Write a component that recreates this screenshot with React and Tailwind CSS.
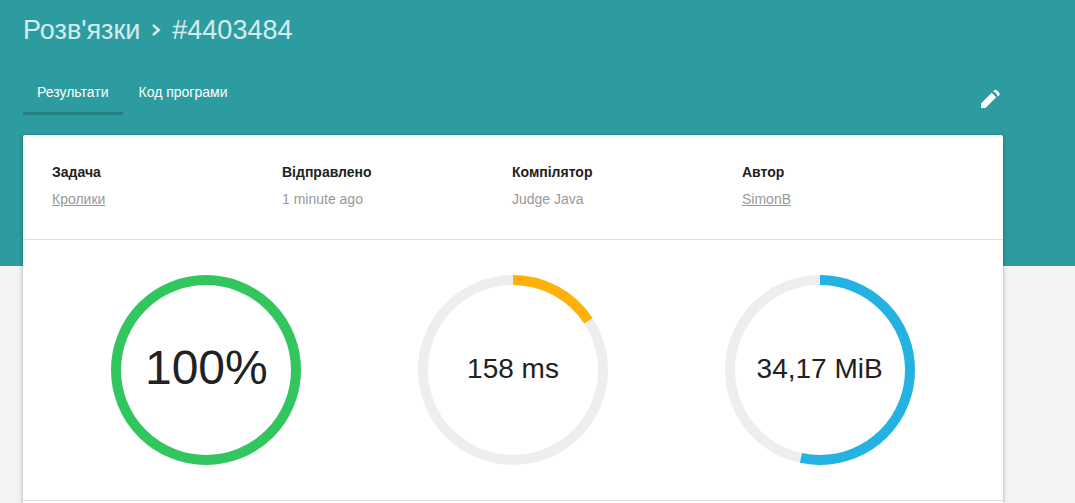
const details = [
  { label: 'Задача', value: 'Кролики', href: '#problem' },
  { label: 'Відправлено', value: '1 minute ago' },
  { label: 'Компілятор', value: 'Judge Java' },
  { label: 'Автор', value: 'SimonB', href: '#author' },
];

const gauges = [
  { text: '100%', percent: 100, stroke: 'stroke-[#32c65f]', size: 'pb-1 text-5xl' },
  { text: '158 ms', percent: 15.8, stroke: 'stroke-[#ffb109]', size: 'pb-0.5 text-[28px]' },
  { text: '34,17 MiB', percent: 53.4, stroke: 'stroke-[#23b2e2]', size: 'pb-0.5 text-[28px]' },
];

function PencilIcon() {
  return (
    <svg viewBox="0 0 24 24" className="size-6" fill="currentColor" aria-hidden="true">
      <path d="M2 17.2c0-.5.2-.9.5-1.2L12.7 5.8l4.5 4.5L7 20.5c-.3.3-.7.5-1.2.5H2z" />
      <path d="M14 4.5l1-1c.9-.9 2.2-.9 3.1 0l1.9 1.9c.9.9.9 2.2 0 3.1l-1.2 1.2c-.3-2.2-2.4-4.6-4.8-5.2z" />
    </svg>
  );
}

function Header() {
  return (
    <header className="bg-[#2c9ca0] pb-[151px] pl-[23px] pr-[72px] pt-2.5 text-white">
      <h1 className="flex items-center text-[27px] leading-10 text-white/80">
        <a href="#submissions">Розв'язки</a>
        <svg viewBox="0 0 10 14" className="mx-[11px] h-3.5 w-2.5" fill="none" stroke="currentColor" strokeWidth="2.4" aria-hidden="true">
          <path d="M2 2 7.8 7 2 12" />
        </svg>
        <span>#4403484</span>
      </h1>
      <div className="mt-5 flex items-start justify-between">
        <nav className="flex gap-0.5 text-sm leading-5">
          <a href="#results" className="border-b-3 border-[#247f82] px-3.5 pb-2.5 pt-3">Результати</a>
          <a href="#code" className="px-3.5 pb-2.5 pt-3">Код програми</a>
        </nav>
        <button type="button" aria-label="Редагувати" className="mt-[17px]">
          <PencilIcon />
        </button>
      </div>
    </header>
  );
}

function Gauge({ text, percent, stroke, size }) {
  return (
    <div className="grid place-items-center">
      <svg viewBox="0 0 190 190" className="col-start-1 row-start-1 size-[190px] -rotate-90" fill="none" strokeWidth="10" aria-hidden="true">
        <circle cx="95" cy="95" r="90" className="stroke-[#eeeeee]" />
        <circle cx="95" cy="95" r="90" pathLength="100" strokeDasharray={`${percent} ${100 - percent}`} className={stroke} />
      </svg>
      <span className={`col-start-1 row-start-1 ${size}`}>{text}</span>
    </div>
  );
}

export default function App() {
  return (
    <div className="min-h-screen bg-[#f3f3f3] font-['Liberation_Sans',Arial,sans-serif] text-[#212121]">
      <Header />
      <main className="-mt-[131px] ml-[23px] mr-[72px] rounded-t-xs bg-white shadow-[0_1px_4px_rgba(0,0,0,0.3)]">
        <dl className="grid grid-cols-4 border-b border-[#e0e0e0] pb-[27px] pl-[29px] pr-[31px] pt-6">
          {details.map(({ label, value, href }) => (
            <div key={label}>
              <dt className="text-sm font-bold leading-[27px]">{label}</dt>
              <dd className="text-sm leading-[26px] text-[#999999]">
                {href ? <a href={href} className="underline">{value}</a> : value}
              </dd>
            </div>
          ))}
        </dl>
        <section className="grid grid-cols-3 border-b border-[#e0e0e0] px-[30px] py-[35px]">
          {gauges.map((gauge) => (
            <Gauge key={gauge.text} {...gauge} />
          ))}
        </section>
        <div className="h-0.5" />
      </main>
    </div>
  );
}
